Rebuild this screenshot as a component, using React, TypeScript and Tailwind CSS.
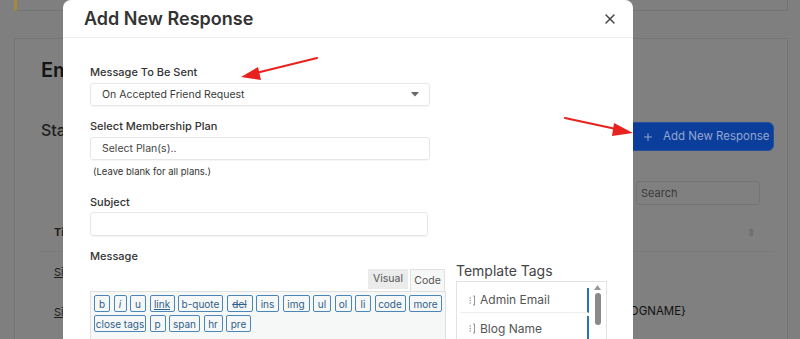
import React from "react";
import { X, Plus } from "lucide-react";

const font = { fontFamily: "Inter, 'Noto Sans', sans-serif" };

function TagIcon() {
  return (
    <svg width="7" height="11" viewBox="0 0 7 11" className="shrink-0">
      <circle cx="1.2" cy="3" r="0.7" fill="#888" />
      <circle cx="1.2" cy="5.5" r="0.7" fill="#888" />
      <circle cx="1.2" cy="8" r="0.7" fill="#888" />
      <path d="M4 1 H5.5 V10 H4" stroke="#888" strokeWidth="0.9" fill="none" />
    </svg>
  );
}

const row1: [string, number][] = [
  ["b", 16], ["i", 13], ["u", 16], ["link", 25], ["b-quote", 45], ["del", 26], ["ins", 23],
  ["img", 27], ["ul", 18], ["ol", 17], ["li", 16], ["code", 31], ["more", 33],
];
const row2: [string, number][] = [["close tags", 52], ["p", 16], ["span", 31], ["hr", 19], ["pre", 25]];

function QBtn({ t, w }: { t: string; w: number }) {
  const extra =
    t === "link" ? "underline" : t === "del" ? "line-through" : t === "i" ? "italic" : "";
  return (
    <span
      style={{ width: w }}
      className={`h-[17px] shrink-0 whitespace-nowrap flex items-center justify-center border border-[#4a86b8] rounded-[2px] bg-[#f6f7f7] text-[10px] text-[#2f5f8a] leading-none ${extra}`}
    >
      {t}
    </span>
  );
}

export default function App() {
  return (
    <div className="relative w-[800px] h-[339px] overflow-hidden bg-[#7f7f7f]" style={font}>
      {/* background page (dimmed) */}
      <div className="ml-[14px] mr-[12px] h-[11px] border-l-[3px] border-l-[#a8893a] border-b border-r border-[#737373]" />
      <div className="ml-[14px] mr-[12px] mt-[27px] h-[320px] border border-[#757575] bg-[#808080] pl-[26px] pr-[13px]">
        <div className="pt-[19px] text-[20px] leading-[24px] font-semibold text-[#141414]">Em</div>
        <div className="mt-[36px] h-[34px] flex justify-between items-start">
          <div className="text-[16px] leading-[20px] font-medium text-[#1e1e1e] mt-[2px]">Status</div>
          <div className="mt-[4px] h-[29px] w-[160px] whitespace-nowrap rounded-md bg-[#0b3d9a] border border-[#274f9c] flex items-center pl-[27px] gap-[9px] text-[11.5px] text-[#93a6cf]">
            <Plus size={12} strokeWidth={2} />
            <span>Add New Response</span>
          </div>
        </div>
        <div className="mt-[29px] flex justify-end pr-[14px]">
          <div className="w-[124px] h-[24px] border border-[#747474] rounded-[3px] flex items-center pl-[4px] text-[11px] text-[#3a3a3a]">
            Search
          </div>
        </div>
        <div className="mt-[9px] flex flex-col">
          <div className="h-[38px] flex items-center pl-[13px] text-[11px] font-bold text-[#1e1e1e] border-b border-[#7a7a7a]">
            <span>Title</span>
            <span className="ml-auto mr-[19px] text-[#6c6c6c] text-[10px]">⇕</span>
          </div>
          <div className="h-[40px] flex items-center pl-[13px] text-[11px] text-[#1e1e1e] underline">Sign up</div>
          <div className="h-[40px] flex items-center pl-[13px] text-[11px] text-[#1e1e1e]">
            <span className="underline">Sign in</span>
            <span className="ml-[522px] text-[11.5px] text-[#111]">{"{BLOGNAME}"}</span>
          </div>
        </div>
      </div>

      {/* Modal */}
      <div className="absolute left-[63px] top-[0px] w-[570px] h-[360px] bg-white rounded-t-lg">
        <div className="h-[38px] border-b border-[#ececec] flex items-center justify-between pl-[21px] pr-[15px]">
          <span className="text-[18px] font-semibold text-[#333]">Add New Response</span>
          <X size={16} strokeWidth={2.2} color="#444" />
        </div>
        <div className="pl-[27px] pt-[27px]">
          <div className="text-[11px] leading-[14px] font-medium text-[#333]">Message To Be Sent</div>
          <div className="mt-[4px] w-[340px] h-[23px] border border-[#e6e6e6] rounded-[3px] shadow-[0_1px_1px_rgba(0,0,0,0.04)] flex items-center pl-[11px] pr-[10px] text-[10.5px] text-[#3a3a3a]">
            <span>On Accepted Friend Request</span>
            <svg width="8" height="5" viewBox="0 0 8 5" className="ml-auto">
              <path d="M0 0 L8 0 L4 4.5 Z" fill="#666" />
            </svg>
          </div>

          <div className="mt-[13px] text-[11px] leading-[14px] font-medium text-[#333]">Select Membership Plan</div>
          <div className="mt-[4px] w-[340px] h-[23px] border border-[#e6e6e6] rounded-[3px] shadow-[0_1px_1px_rgba(0,0,0,0.04)] flex items-center pl-[11px] text-[10.5px] text-[#444]">
            Select Plan(s)..
          </div>
          <div className="mt-[6px] pl-[3px] text-[9.5px] leading-[12px] text-[#333]">(Leave blank for all plans.)</div>

          <div className="mt-[17px] text-[11px] leading-[14px] font-medium text-[#333]">Subject</div>
          <div className="mt-[3px] w-[338px] h-[24px] border border-[#e6e6e6] rounded-[3px] shadow-[0_1px_1px_rgba(0,0,0,0.04)]" />

          <div className="flex gap-[10px]">
            <div className="w-[356px]">
              <div className="mt-[13px] text-[11px] leading-[14px] font-medium text-[#333]">Message</div>
              <div className="mt-[6px] flex justify-end gap-[2px] pr-[1px]">
                <div className="w-[40px] h-[20px] bg-[#ebebeb] flex items-center justify-center text-[10.5px] text-[#555]">Visual</div>
                <div className="w-[35px] h-[22px] bg-[#f6f7f7] border border-b-0 border-[#e0e0e0] flex items-center justify-center text-[10.5px] text-[#555]">Code</div>
              </div>
              <div className="h-[60px] border border-[#e0e0e0] bg-[#f6f7f7] pl-[3px] pt-[3px] flex flex-col gap-[3px]">
                <div className="flex gap-[3.5px]">
                  {row1.map(([t, w]) => (
                    <QBtn key={t} t={t} w={w} />
                  ))}
                </div>
                <div className="flex gap-[3.5px]">
                  {row2.map(([t, w]) => (
                    <QBtn key={t} t={t} w={w} />
                  ))}
                </div>
              </div>
            </div>
            <div className="w-[151px] pt-[26px]">
              <div className="text-[14px] leading-[18px] text-[#444]">Template Tags</div>
              <div className="mt-[1px] h-[70px] border border-[#e3e3e3] flex">
                <div className="flex-1 pl-[3px] pt-[6px] flex flex-col gap-[3px]">
                  <div className="h-[25px] border-r-2 border-[#2f72b0] border-b border-b-[#eee] flex items-center gap-[4px] pl-[9px] text-[12px] text-[#555]">
                    <TagIcon />
                    <span>Admin Email</span>
                  </div>
                  <div className="h-[25px] border-r-2 border-[#2f72b0] flex items-center gap-[4px] pl-[9px] text-[12px] text-[#555]">
                    <TagIcon />
                    <span>Blog Name</span>
                  </div>
                </div>
                <div className="w-[17px] flex flex-col items-center pt-[3px]">
                  <svg width="7" height="5" viewBox="0 0 7 5">
                    <path d="M0 5 L7 5 L3.5 0 Z" fill="#999" />
                  </svg>
                  <div className="mt-[3px] w-[6px] h-[32px] rounded-full bg-[#8a8a8a]" />
                </div>
              </div>
            </div>
          </div>
        </div>
      </div>

      {/* Red arrows */}
      <svg className="absolute inset-0 pointer-events-none" width="800" height="339">
        <line x1="317" y1="58" x2="256" y2="73" stroke="#e8221f" strokeWidth="2.2" strokeLinecap="round" />
        <path d="M241 77 L258 67 L261 80 Z" fill="#e8221f" />
        <line x1="565" y1="118" x2="616" y2="129" stroke="#e8221f" strokeWidth="2.2" strokeLinecap="round" />
        <path d="M633 133 L614 123 L612 136 Z" fill="#e8221f" />
      </svg>
    </div>
  );
}
